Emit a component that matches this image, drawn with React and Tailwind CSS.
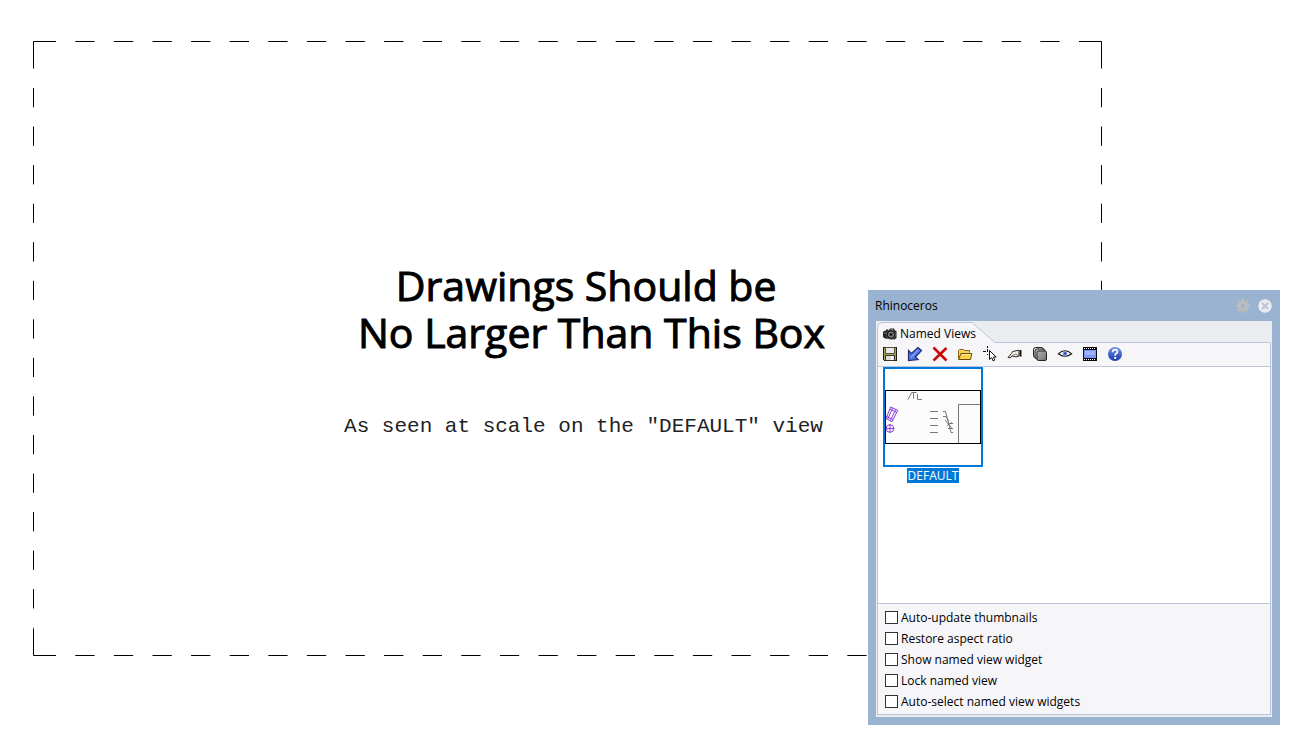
import React from "react";

const icon = "block h-4 w-4";

function SaveIcon() {
  return (
    <svg viewBox="0 0 16 16" className={icon} shapeRendering="crispEdges" aria-hidden="true">
      <path d="M1 1H15V15H2L1 14Z" fill="#1c1a12" />
      <path d="M2 2H14V14H2Z" fill="#a9a15c" />
      <path d="M3 1H13V8H3Z" fill="#55523a" />
      <path d="M4 2H12V7H4Z" fill="#e9e9ec" />
      <path d="M3 9H13V15H3Z" fill="#3a382c" />
      <path d="M4 10H12V14H4Z" fill="#dcdcdc" />
      <path d="M9 10H11V14H9Z" fill="#ffffff" />
    </svg>
  );
}

function ArrowIcon() {
  return (
    <svg viewBox="0 0 16 16" className={icon} aria-hidden="true">
      <path d="M1.5 4.5L4.4 7.4L11 1.5L14.5 4.6L8.4 11L11 13.6L1.5 14.5Z" fill="#4f76ea" stroke="#1c2c6c" strokeWidth="1.2" />
      <path d="M3.6 11.8L11.2 3.8" stroke="#7c9cff" strokeWidth="1.4" />
    </svg>
  );
}

function DeleteIcon() {
  return (
    <svg viewBox="0 0 16 16" className={icon} aria-hidden="true">
      <path d="M1.5 1.5L14.5 14.5M14.5 2L1.5 14.5" fill="none" stroke="#c80a0a" strokeWidth="2.6" />
    </svg>
  );
}

function FolderIcon() {
  return (
    <svg viewBox="0 0 16 16" className={icon} aria-hidden="true">
      <path d="M1.5 12.5V4.5L2.5 3.5H6.5L7.5 4.5H12.5V6.5" fill="#f5d25a" stroke="#8a6410" />
      <path d="M1.5 13.5L4 7.5H14.8L13.5 13.5Z" fill="#fbd04c" stroke="#6b4a08" />
      <path d="M5 8.5H13.5" stroke="#fff0a8" />
    </svg>
  );
}

function PickIcon() {
  return (
    <svg viewBox="0 0 16 16" className={icon} aria-hidden="true">
      <path d="M5.5 0V2M5.5 3V5M5.5 8V9M1 5.5H4M8 5.5H9M5 5.5H6" stroke="#111" shapeRendering="crispEdges" />
      <path d="M7.5 4.5V13.5L9.7 11.6L11 14.8L12.8 14L11.4 11H14.2Z" fill="#fff" stroke="#111" />
    </svg>
  );
}

function CameraIcon() {
  return (
    <svg viewBox="0 0 16 16" className={icon} aria-hidden="true">
      <path d="M1 11.5L4.5 7.5L5.5 5.5L12 4.2V10L9 11L5 9.8L3.5 11.8Z" fill="#f4efe2" stroke="#2f2c25" strokeWidth="1" />
      <path d="M5 9.8L8.5 8.2L11.5 9.8" fill="none" stroke="#666" strokeWidth="0.9" />
      <path d="M12.5 4H14.5V10.5H12.5Z" fill="#171717" />
    </svg>
  );
}

function LayersIcon() {
  return (
    <svg viewBox="0 0 16 16" className={icon} aria-hidden="true">
      <defs>
        <linearGradient id="layer-fill" x1="0" y1="0" x2="1" y2="1">
          <stop offset="0" stopColor="#b4b4b4" />
          <stop offset="1" stopColor="#6e6e6e" />
        </linearGradient>
      </defs>
      <rect x="1.5" y="1.5" width="10" height="10" rx="2" fill="#e4e4e4" stroke="#222" />
      <rect x="3" y="3" width="10" height="10" rx="2" fill="#bbbbbb" stroke="#222" />
      <rect x="5" y="5" width="9.5" height="9.5" rx="1.5" fill="url(#layer-fill)" stroke="#222" />
    </svg>
  );
}

function EyeIcon() {
  return (
    <svg viewBox="0 0 16 16" className={icon} aria-hidden="true">
      <path d="M1.3 7.8Q8 1.8 14.7 7.8Q8 12.6 1.3 7.8Z" fill="#fff" stroke="#111" strokeWidth="1.1" />
      <circle cx="8" cy="7.6" r="2.4" fill="#7b93e6" />
      <circle cx="8" cy="7.6" r="1" fill="#1c2a78" />
    </svg>
  );
}

function FilmIcon() {
  return (
    <svg viewBox="0 0 16 16" className={icon} shapeRendering="crispEdges" aria-hidden="true">
      <path d="M1 1H15V15H1Z" fill="#0b0b0e" />
      <path d="M2 4H14V12H2Z" fill="#7d97f5" />
      <path d="M3 5H13V9H3Z" fill="#9db2ff" />
      <path d="M2 2.5H14M2 13.5H14" stroke="#fff" strokeDasharray="1 1" />
    </svg>
  );
}

function HelpIcon() {
  return (
    <svg viewBox="0 0 16 16" className={icon} aria-hidden="true">
      <defs>
        <linearGradient id="help-fill" x1="0" y1="0" x2="0" y2="1">
          <stop offset="0" stopColor="#6f92ee" />
          <stop offset="1" stopColor="#1a37a8" />
        </linearGradient>
      </defs>
      <circle cx="8" cy="8" r="7" fill="url(#help-fill)" />
      <path d="M5.6 6.2Q5.5 3.6 8.1 3.6Q10.6 3.7 10.4 5.8Q10.2 7.1 8.9 7.8Q8.1 8.4 8.1 9.8" fill="none" stroke="#fff" strokeWidth="1.7" />
      <rect x="7.2" y="11" width="2" height="2" fill="#fff" />
    </svg>
  );
}

function TabCamera() {
  return (
    <svg viewBox="0 0 16 14" className="block h-3.5 w-4" aria-hidden="true">
      <path d="M1 5L2 4L3.5 4L4 2.5H6L6.5 3.5L8 1.5H12L13 3.5L14.5 4V11L12.5 12.5L3 11.5L1 10Z" fill="#24231f" />
      <circle cx="9" cy="7.6" r="4.6" fill="#111" stroke="#6d6b63" strokeWidth="0.8" />
      <circle cx="9" cy="7.6" r="2.6" fill="#4a4a4a" stroke="#aaa" strokeWidth="0.8" />
      <circle cx="9" cy="7.6" r="1" fill="#0c0c0c" />
      <path d="M2 6H4M9 2.5H11" stroke="#999" strokeWidth="0.8" />
    </svg>
  );
}

const tools = [
  ["Save", SaveIcon],
  ["Restore view", ArrowIcon],
  ["Delete", DeleteIcon],
  ["Import", FolderIcon],
  ["Pick", PickIcon],
  ["Edit view", CameraIcon],
  ["Copy", LayersIcon],
  ["Preview", EyeIcon],
  ["Animate", FilmIcon],
  ["Help", HelpIcon],
];

const options = [
  "Auto-update thumbnails",
  "Restore aspect ratio",
  "Show named view widget",
  "Lock named view",
  "Auto-select named view widgets",
];

function DashedFrame() {
  return (
    <svg viewBox="0 0 1069 615" preserveAspectRatio="none" className="absolute inset-0 h-full w-full" aria-hidden="true">
      <g fill="none" stroke="#000" strokeWidth="1">
        <path d="M0.5 27.5V0.5H23M1046 0.5H1068.5V27.5M1068.5 587.5V614.5H1046M23 614.5H0.5V587.5" />
        <path d="M42.3 0.5H1046M42.3 614.5H1046" strokeDasharray="19.3 19.3" />
        <path d="M0.5 47V587M1068.5 47V587" strokeDasharray="19.3 19.25" />
      </g>
    </svg>
  );
}

function Thumbnail() {
  return (
    <svg viewBox="0 0 96 54" className="block w-full" aria-hidden="true">
      <rect x="0.5" y="0.5" width="95" height="53" fill="#fcfcfc" stroke="#000" />
      <g fill="none" stroke="#8a3fd8" strokeWidth="1">
        <path d="M5.7 17L12.8 20.3L7 31.7L1 28.5ZM7.7 18L2.6 29.3M10.8 19.4L5.2 30.8M5 19L11.6 22.3M1.8 26.5L8 29.5" />
        <circle cx="5" cy="38.5" r="3.8" />
        <path d="M0.8 38.5H9.4M5 34V43" />
      </g>
      <g fill="none" stroke="#777" strokeWidth="1">
        <path d="M23 9.5L26.7 2.5H31.5M28.5 2.5V8.5M32.5 4V9.5H37" />
        <path d="M45 21.5H53M45 28.5H53M45 35.5H53M45 42.5H53" />
        <path d="M58 21.5H60.5L66 42.5H68M58 26.5H61L64 31.5M60 30L67 38.5M64 33.5H68M62 35.5L67 32.5M63 38.5H68" />
        <path d="M73.5 53V14.5H95" />
      </g>
    </svg>
  );
}

function NamedViewsPanel() {
  return (
    <section
      aria-label="Rhinoceros"
      className="absolute right-[11px] bottom-[22px] flex h-[435px] w-[412px] flex-col bg-[#99b3d1] px-2 pb-2 text-[12px] leading-4 text-black"
    >
      <header className="flex h-[31px] shrink-0 items-center justify-between">
        <h2 className="-ml-px">Rhinoceros</h2>
        <div className="flex items-center gap-2">
          <button type="button" aria-label="Settings">
            <svg viewBox="0 0 14 14" className="block h-3.5 w-3.5" aria-hidden="true">
              <g stroke="#bdbdbd" strokeWidth="2.6">
                <path d="M7 0V14M0 7H14M2.2 2.2L11.8 11.8M11.8 2.2L2.2 11.8" />
              </g>
              <circle cx="7" cy="7" r="5" fill="#bdbdbd" />
              <circle cx="7" cy="7" r="2" fill="#99b3d1" />
            </svg>
          </button>
          <button type="button" aria-label="Close">
            <svg viewBox="0 0 14 14" className="block h-3.5 w-3.5" aria-hidden="true">
              <circle cx="7" cy="7" r="6.8" fill="#ebecf0" />
              <path d="M4 4L10 10M10 4L4 10" stroke="#bcc5dc" strokeWidth="2" />
            </svg>
          </button>
        </div>
      </header>

      <div className="flex min-h-0 flex-1 flex-col bg-[#ebecf0] px-px pb-[2px]">
        <div className="relative h-[21px] shrink-0">
          <svg viewBox="0 0 119 22" className="absolute top-0 left-0 h-[22px] w-[119px]" aria-hidden="true">
            <path d="M0.5 22V6.5Q0.8 2 5 1.5H95L118 21.5V22Z" fill="#f6f6f9" />
            <path d="M0.5 22V6.5Q0.8 2 5 1.5H95L118 21.5" fill="none" stroke="#bcc5dc" />
          </svg>
          <button type="button" className="relative flex h-full items-center gap-[2px] pt-[4px] pl-[5px]">
            <TabCamera />
            Named Views
          </button>
        </div>

        <div className="flex min-h-0 flex-1 flex-col border border-[#bcc5dc] bg-[#f6f6f9]">
          <div className="flex h-6 shrink-0 gap-px border-b border-[#bcc5dc]">
            {tools.map(([name, Icon]) => (
              <button key={name} type="button" aria-label={name} className="flex h-[22px] w-6 items-center justify-center">
                <Icon />
              </button>
            ))}
          </div>

          <div className="min-h-0 flex-1 bg-white pl-[5px]">
            <button type="button" className="flex w-[100px] flex-col items-center gap-px">
              <span className="flex h-[100px] w-full items-center border-2 border-[#0078d7]">
                <Thumbnail />
              </span>
              <span className="bg-[#0078d7] px-px leading-[15px] text-white">DEFAULT</span>
            </button>
          </div>

          <div className="shrink-0 border-t border-[#bcc5dc] pt-[3px] pb-[2px] pl-[7px]">
            {options.map((label) => (
              <label key={label} className="flex h-[21px] items-center gap-[3px]">
                <input type="checkbox" className="h-[13px] w-[13px] shrink-0 appearance-none border border-[#333] bg-white checked:bg-[#0078d7]" />
                {label}
              </label>
            ))}
          </div>
        </div>
      </div>
    </section>
  );
}

export default function App() {
  return (
    <main className="relative flex min-h-screen flex-col bg-white pt-[41px] pr-[189px] pb-[91px] pl-[33px] font-['Open_Sans','Noto_Sans',sans-serif] text-black">
      <div className="relative flex flex-1 flex-col items-center pt-[221px] pl-12 text-center">
        <DashedFrame />
        <h1 className="text-[41px] leading-[47px] font-medium [-webkit-text-stroke:1px_black]">
          Drawings Should be{"\u00a0"}
          <br />
          No Larger Than This Box
        </h1>
        <p className="pt-[59px] pr-4 font-['Liberation_Mono',monospace] text-[21px] leading-6 text-[#222]">
          As seen at scale on the "DEFAULT" view
        </p>
      </div>
      <NamedViewsPanel />
    </main>
  );
}
